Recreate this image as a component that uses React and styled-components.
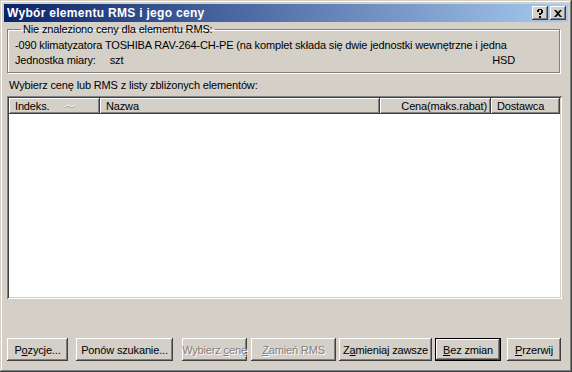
import React from "react";
import styled, { createGlobalStyle } from "styled-components";

const Global = createGlobalStyle`
  html, body {
    margin: 0;
    padding: 0;
    background: #d4d0c8;
  }
  * { box-sizing: border-box; }
`;

const Window = styled.div`
  width: 572px;
  height: 372px;
  background: #d4d0c8;
  padding: 4px;
  display: flex;
  flex-direction: column;
  font-family: "Liberation Sans", Arial, sans-serif;
  font-size: 11px;
  letter-spacing: -0.15px;
  color: #000;
  box-shadow: inset -1px -1px #404040, inset 1px 1px #d4d0c8,
    inset -2px -2px #808080, inset 2px 2px #fff;
`;

const TitleBar = styled.div`
  height: 18px;
  display: flex;
  align-items: center;
  padding: 0 2px 0 2px;
  background: linear-gradient(to right, #0a246a, #a6caf0);
`;

const Title = styled.div`
  flex: 1;
  color: #fff;
  font-weight: bold;
  font-size: 12px;
  letter-spacing: 0.3px;
  padding-left: 1px;
`;

const CapButton = styled.div`
  width: 16px;
  height: 14px;
  margin-left: ${(p) => (p.$gap ? "2px" : "0")};
  background: #d4d0c8;
  box-shadow: inset -1px -1px #404040, inset 1px 1px #fff,
    inset -2px -2px #808080;
  display: flex;
  align-items: center;
  justify-content: center;
`;

const Content = styled.div`
  flex: 1;
  display: flex;
  flex-direction: column;
  padding: 1px 0 0 3px;
`;

const Group = styled.fieldset`
  margin: 0 8px 0 0;
  padding: 2px 8px 0 7px;
  height: 50px;
  border: 1px solid #808080;
  box-shadow: inset 1px 1px #fff, 1px 1px #fff;
  min-width: 0;
`;

const Legend = styled.legend`
  padding: 0 2px;
  margin-left: 6px;
  line-height: 13px;
`;

const InfoLine = styled.div`
  height: 15px;
  line-height: 15px;
  white-space: nowrap;
  display: flex;
`;

const Unit = styled.span`
  margin-left: 14px;
`;

const Right = styled.span`
  margin-left: auto;
  margin-right: 36px;
`;

const ListLabel = styled.div`
  margin: 6px 0 0 2px;
  line-height: 13px;
`;

const ListBox = styled.div`
  margin: 4px 6px 0 0;
  height: 203px;
  background: #fff;
  padding: 2px;
  box-shadow: inset 1px 1px #808080, inset -1px -1px #fff,
    inset 2px 2px #404040, inset -2px -2px #d4d0c8;
`;

const Header = styled.div`
  display: flex;
  height: 16px;
`;

const HeadCell = styled.div`
  width: ${(p) => p.$w}px;
  background: #d4d0c8;
  display: flex;
  align-items: center;
  justify-content: ${(p) => (p.$right ? "flex-end" : "flex-start")};
  padding: 0 ${(p) => (p.$right ? "4px" : "6px")} 0 6px;
  white-space: nowrap;
  box-shadow: inset -1px -1px #404040, inset 1px 1px #fff,
    inset -2px -2px #808080;
`;

const SortMark = styled.svg`
  margin-left: 16px;
`;

const Buttons = styled.div`
  margin-top: auto;
  display: flex;
  padding: 0 0 7px 0;
`;

const Button = styled.div`
  height: 23px;
  width: ${(p) => p.$w}px;
  margin-left: ${(p) => p.$ml || 0}px;
  display: flex;
  align-items: center;
  justify-content: center;
  white-space: nowrap;
  background: #d4d0c8;
  color: ${(p) => (p.$disabled ? "#808080" : "#000")};
  text-shadow: ${(p) => (p.$disabled ? "1px 1px 0 #fff" : "none")};
  box-shadow: ${(p) =>
    p.$default
      ? "inset 0 0 0 1px #000, inset -2px -2px #404040, inset 2px 2px #fff, inset -3px -3px #808080"
      : "inset -1px -1px #404040, inset 1px 1px #fff, inset -2px -2px #808080"};
  u {
    text-decoration: underline;
    text-underline-offset: 1px;
  }
`;

export default function App() {
  return (
    <>
      <Global />
      <Window>
        <TitleBar>
          <Title>Wybór elementu RMS i jego ceny</Title>
          <CapButton>
            <svg width="8" height="9" viewBox="0 0 8 9">
              <rect x="1" y="1" width="2" height="2" fill="#000" />
              <rect x="2" y="0" width="4" height="1" fill="#000" />
              <rect x="5" y="1" width="2" height="3" fill="#000" />
              <rect x="4" y="4" width="2" height="1" fill="#000" />
              <rect x="3" y="4" width="2" height="2" fill="#000" />
              <rect x="3" y="7" width="2" height="2" fill="#000" />
            </svg>
          </CapButton>
          <CapButton $gap>
            <svg width="8" height="7" viewBox="0 0 8 7">
              <path
                d="M0 0 H2 L4 2 L6 0 H8 L5 3.5 L8 7 H6 L4 5 L2 7 H0 L3 3.5 Z"
                fill="#000"
              />
            </svg>
          </CapButton>
        </TitleBar>
        <Content>
          <Group>
            <Legend>Nie znaleziono ceny dla elementu RMS:</Legend>
            <InfoLine>
              -090 klimatyzatora TOSHIBA RAV-264-CH-PE (na komplet składa się
              dwie jednostki wewnętrzne i jedna
            </InfoLine>
            <InfoLine>
              Jednostka miary:<Unit>szt</Unit>
              <Right>HSD</Right>
            </InfoLine>
          </Group>
          <ListLabel>Wybierz cenę lub RMS z listy zbliżonych elementów:</ListLabel>
          <ListBox>
            <Header>
              <HeadCell $w={91}>
                Indeks.
                <SortMark width="11" height="4" viewBox="0 0 11 4">
                  <path d="M0 3 L3 1 L7 3 L10 1" stroke="#fff" fill="none" />
                  <path d="M0 4 L3 2 L7 4 L10 2" stroke="#808080" fill="none" strokeWidth="0.6" />
                </SortMark>
              </HeadCell>
              <HeadCell $w={280}>Nazwa</HeadCell>
              <HeadCell $w={111} $right>
                Cena(maks.rabat)
              </HeadCell>
              <HeadCell $w={69}>Dostawca</HeadCell>
            </Header>
          </ListBox>
          <Buttons>
            <Button $w={61}>
              <span>P<u>o</u>zycje...</span>
            </Button>
            <Button $w={97} $ml={8}>
              <span>Ponów szukanie...</span>
            </Button>
            <Button $w={65} $ml={9} $disabled>
              <span>Wybierz <u>c</u>enę</span>
            </Button>
            <Button $w={85} $ml={4} $disabled>
              <span><u>Z</u>amień RMS</span>
            </Button>
            <Button $w={93} $ml={3}>
              <span>Z<u>a</u>mieniaj zawsze</span>
            </Button>
            <Button $w={66} $ml={3} $default>
              <span><u>B</u>ez zmian</span>
            </Button>
            <Button $w={54} $ml={6}>
              <span><u>P</u>rzerwij</span>
            </Button>
          </Buttons>
        </Content>
      </Window>
    </>
  );
}
